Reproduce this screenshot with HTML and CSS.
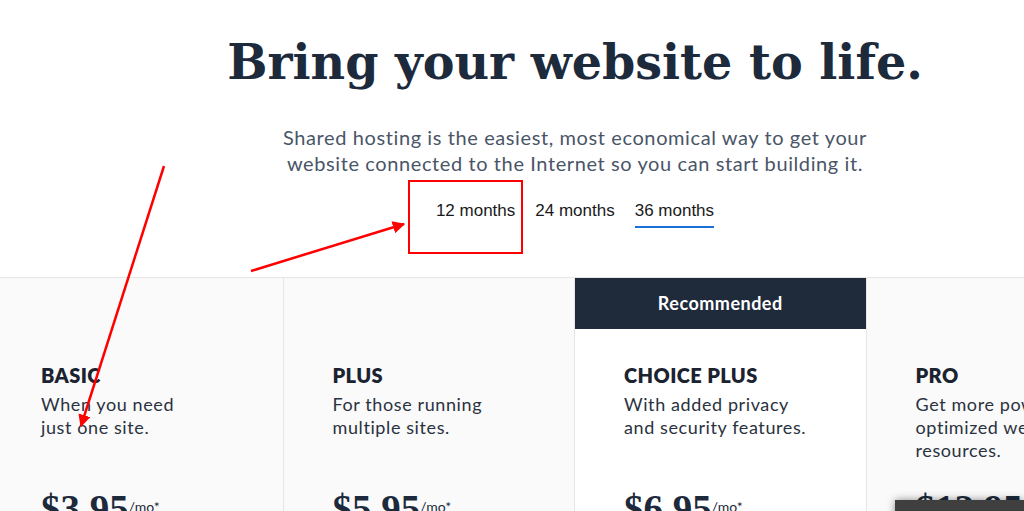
FILE: index.html
```html
<!DOCTYPE html>
<html lang="en">
<head>
  <meta charset="UTF-8" />
  <meta name="viewport" content="width=device-width, initial-scale=1.0"/>
  <title>Shared Hosting</title>
  <link rel="stylesheet" href="styles.css">
</head>
<body>
  <div class="page">
    <header class="hero">
      <h1>Bring your website to life.</h1>
      <p class="lead">Shared hosting is the easiest, most economical way to get your<br>website connected to the Internet so you can start building it.</p>
      <nav class="terms">
        <a class="term">12 months</a>
        <a class="term">24 months</a>
        <a class="term active">36 months</a>
      </nav>
    </header>

    <section class="plans">
      <div class="plan">
        <div class="plan-badge"></div>
        <div class="plan-body">
          <h2>BASIC</h2>
          <p class="plan-desc">When you need<br>just one site.</p>
          <div class="price">$3.95<span>/mo*</span></div>
        </div>
      </div>
      <div class="plan">
        <div class="plan-badge"></div>
        <div class="plan-body">
          <h2>PLUS</h2>
          <p class="plan-desc">For those running<br>multiple sites.</p>
          <div class="price">$5.95<span>/mo*</span></div>
        </div>
      </div>
      <div class="plan featured">
        <div class="plan-badge">Recommended</div>
        <div class="plan-body">
          <h2>CHOICE PLUS</h2>
          <p class="plan-desc">With added privacy<br>and security features.</p>
          <div class="price">$6.95<span>/mo*</span></div>
        </div>
      </div>
      <div class="plan">
        <div class="plan-badge"></div>
        <div class="plan-body">
          <h2>PRO</h2>
          <p class="plan-desc">Get more power with<br>optimized website<br>resources.</p>
          <div class="price">$12.95<span>/mo*</span></div>
        </div>
      </div>
    </section>
  </div>

  <div class="chat-box"></div>

  <!-- review markup drawn over the screenshot -->
  <svg class="marks" width="1024" height="511" viewBox="0 0 1024 511">
    <defs>
      <marker id="head" viewBox="0 0 10 10" refX="9" refY="5" markerWidth="5" markerHeight="5" orient="auto">
        <path d="M0 0 L10 5 L0 10 z" fill="#ff0000"/>
      </marker>
    </defs>
    <rect x="409" y="181" width="113" height="72" fill="none" stroke="#ff0000" stroke-width="2"/>
    <line x1="251" y1="271" x2="404" y2="224" stroke="#ff0000" stroke-width="2.5" marker-end="url(#head)"/>
    <line x1="164" y1="166" x2="81" y2="426" stroke="#ff0000" stroke-width="2.5" marker-end="url(#head)"/>
  </svg>
</body>
</html>
```

FILE: styles.css
```css
:root {
  --navy: #1c2a3c;
  --text: #2a3240;
  --muted: #4a5568;
  --line: #e6e6e6;
  --blue: #1a6fd8;
}
body {
  margin: 0;
  width: 1024px;
  height: 511px;
  overflow: hidden;
  background-color: #fff;
  font-family: Lato, 'Noto Sans', sans-serif;
  color: var(--text);
}
.page {
  width: 1166px;
  margin-left: -8px;
}
.hero {
  padding-top: 33px;
  text-align: center;
}
h1 {
  margin: 0;
  font-family: 'DejaVu Serif', serif;
  font-weight: bold;
  font-size: 47.6px;
  line-height: 58px;
  color: var(--navy);
}
.lead {
  margin: 33px 0 0;
  font-size: 20px;
  letter-spacing: 0.6px;
  line-height: 26px;
  color: var(--muted);
}
.terms {
  display: flex;
  justify-content: center;
  gap: 20px;
  margin-top: 25px;
}
.term {
  font-family: 'Liberation Sans', Arial, sans-serif;
  font-size: 17px;
  line-height: 20px;
  padding-bottom: 5px;
  border-bottom: 2px solid transparent;
  color: #1a1a1a;
}
.term.active {
  border-bottom-color: var(--blue);
}
.plans {
  display: grid;
  grid-template-columns: repeat(4, 1fr);
  margin-top: 49px;
  border-top: 1px solid var(--line);
}
.plan {
  background-color: #fafafa;
  border-right: 1px solid var(--line);
}
.plan.featured {
  background-color: #fff;
}
.plan-badge {
  height: 51px;
}
.featured .plan-badge {
  background-color: #1f2a3b;
  color: #fff;
  font-weight: bold;
  font-size: 18px;
  letter-spacing: 0.5px;
  line-height: 51px;
  text-align: center;
}
.plan-body {
  padding: 34px 10px 0 49px;
}
h2 {
  margin: 0;
  font-size: 20px;
  letter-spacing: 0.4px;
  line-height: 24px;
  font-weight: 800;
  color: #1b2230;
}
.plan-desc {
  margin: 6px 0 0;
  min-height: 69px;
  font-size: 18px;
  letter-spacing: 0.6px;
  line-height: 23px;
  white-space: nowrap;
}
.price {
  margin-top: 21px;
  font-family: 'Liberation Serif', serif;
  font-weight: bold;
  font-size: 39px;
  line-height: 48px;
  color: var(--navy);
}
.price span {
  font-family: Lato, sans-serif;
  font-weight: normal;
  font-size: 14px;
  vertical-align: 10px;
}
.chat-box {
  position: absolute;
  left: 895px;
  top: 500px;
  width: 129px;
  height: 30px;
  background-color: #3f3f3f;
  box-shadow: 0 0 8px rgba(0,0,0,0.45);
}
.marks {
  position: absolute;
  left: 0;
  top: 0;
  pointer-events: none;
}
```
